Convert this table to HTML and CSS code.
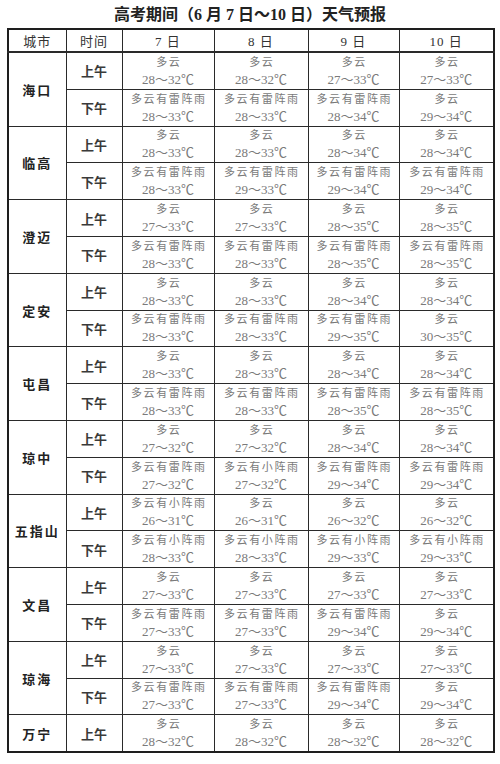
FILE: index.html
```html
<!DOCTYPE html>
<html lang="zh-CN">
<head>
<meta charset="utf-8">
<title>高考期间天气预报</title>
<link rel="stylesheet" href="styles.css">
</head>
<body>
<div class="page">
  <h1 class="title">高考期间（6 月 7 日～10 日）天气预报</h1>
  <table class="forecast">
    <colgroup>
      <col class="c-city"><col class="c-time"><col class="c-d7"><col class="c-d8"><col class="c-d9"><col class="c-d10">
    </colgroup>
    <thead>
      <tr><th>城市</th><th>时间</th><th>7 日</th><th>8 日</th><th>9 日</th><th>10 日</th></tr>
    </thead>
    <tbody>
      <tr><td class="city" rowspan="2">海口</td><td class="time">上午</td>
        <td><span class="w">多云</span><span class="t">28～32℃</span></td>
        <td><span class="w">多云</span><span class="t">28～32℃</span></td>
        <td><span class="w">多云</span><span class="t">27～33℃</span></td>
        <td><span class="w">多云</span><span class="t">27～33℃</span></td></tr>
      <tr><td class="time">下午</td>
        <td><span class="w">多云有雷阵雨</span><span class="t">28～33℃</span></td>
        <td><span class="w">多云有雷阵雨</span><span class="t">28～33℃</span></td>
        <td><span class="w">多云有雷阵雨</span><span class="t">28～34℃</span></td>
        <td><span class="w">多云</span><span class="t">29～34℃</span></td></tr>

      <tr><td class="city" rowspan="2">临高</td><td class="time">上午</td>
        <td><span class="w">多云</span><span class="t">28～33℃</span></td>
        <td><span class="w">多云</span><span class="t">28～33℃</span></td>
        <td><span class="w">多云</span><span class="t">28～34℃</span></td>
        <td><span class="w">多云</span><span class="t">28～34℃</span></td></tr>
      <tr><td class="time">下午</td>
        <td><span class="w">多云有雷阵雨</span><span class="t">28～33℃</span></td>
        <td><span class="w">多云有雷阵雨</span><span class="t">29～33℃</span></td>
        <td><span class="w">多云有雷阵雨</span><span class="t">29～34℃</span></td>
        <td><span class="w">多云有雷阵雨</span><span class="t">29～34℃</span></td></tr>

      <tr><td class="city" rowspan="2">澄迈</td><td class="time">上午</td>
        <td><span class="w">多云</span><span class="t">27～33℃</span></td>
        <td><span class="w">多云</span><span class="t">27～33℃</span></td>
        <td><span class="w">多云</span><span class="t">28～35℃</span></td>
        <td><span class="w">多云</span><span class="t">28～35℃</span></td></tr>
      <tr><td class="time">下午</td>
        <td><span class="w">多云有雷阵雨</span><span class="t">28～33℃</span></td>
        <td><span class="w">多云有雷阵雨</span><span class="t">28～33℃</span></td>
        <td><span class="w">多云有雷阵雨</span><span class="t">28～35℃</span></td>
        <td><span class="w">多云有雷阵雨</span><span class="t">28～35℃</span></td></tr>

      <tr><td class="city" rowspan="2">定安</td><td class="time">上午</td>
        <td><span class="w">多云</span><span class="t">28～33℃</span></td>
        <td><span class="w">多云</span><span class="t">28～33℃</span></td>
        <td><span class="w">多云</span><span class="t">28～34℃</span></td>
        <td><span class="w">多云</span><span class="t">28～34℃</span></td></tr>
      <tr><td class="time">下午</td>
        <td><span class="w">多云有雷阵雨</span><span class="t">28～33℃</span></td>
        <td><span class="w">多云有雷阵雨</span><span class="t">28～33℃</span></td>
        <td><span class="w">多云有雷阵雨</span><span class="t">29～35℃</span></td>
        <td><span class="w">多云</span><span class="t">30～35℃</span></td></tr>

      <tr><td class="city" rowspan="2">屯昌</td><td class="time">上午</td>
        <td><span class="w">多云</span><span class="t">28～33℃</span></td>
        <td><span class="w">多云</span><span class="t">28～33℃</span></td>
        <td><span class="w">多云</span><span class="t">28～34℃</span></td>
        <td><span class="w">多云</span><span class="t">28～34℃</span></td></tr>
      <tr><td class="time">下午</td>
        <td><span class="w">多云有雷阵雨</span><span class="t">28～33℃</span></td>
        <td><span class="w">多云有雷阵雨</span><span class="t">28～33℃</span></td>
        <td><span class="w">多云有雷阵雨</span><span class="t">28～35℃</span></td>
        <td><span class="w">多云有雷阵雨</span><span class="t">28～35℃</span></td></tr>

      <tr><td class="city" rowspan="2">琼中</td><td class="time">上午</td>
        <td><span class="w">多云</span><span class="t">27～32℃</span></td>
        <td><span class="w">多云</span><span class="t">27～32℃</span></td>
        <td><span class="w">多云</span><span class="t">28～34℃</span></td>
        <td><span class="w">多云</span><span class="t">28～34℃</span></td></tr>
      <tr><td class="time">下午</td>
        <td><span class="w">多云有雷阵雨</span><span class="t">27～32℃</span></td>
        <td><span class="w">多云有小阵雨</span><span class="t">27～32℃</span></td>
        <td><span class="w">多云有雷阵雨</span><span class="t">29～34℃</span></td>
        <td><span class="w">多云有雷阵雨</span><span class="t">29～34℃</span></td></tr>

      <tr><td class="city" rowspan="2">五指山</td><td class="time">上午</td>
        <td><span class="w">多云有小阵雨</span><span class="t">26～31℃</span></td>
        <td><span class="w">多云</span><span class="t">26～31℃</span></td>
        <td><span class="w">多云</span><span class="t">26～32℃</span></td>
        <td><span class="w">多云</span><span class="t">26～32℃</span></td></tr>
      <tr><td class="time">下午</td>
        <td><span class="w">多云有小阵雨</span><span class="t">28～33℃</span></td>
        <td><span class="w">多云有小阵雨</span><span class="t">28～33℃</span></td>
        <td><span class="w">多云有小阵雨</span><span class="t">29～33℃</span></td>
        <td><span class="w">多云有小阵雨</span><span class="t">29～33℃</span></td></tr>

      <tr><td class="city" rowspan="2">文昌</td><td class="time">上午</td>
        <td><span class="w">多云</span><span class="t">27～33℃</span></td>
        <td><span class="w">多云</span><span class="t">27～33℃</span></td>
        <td><span class="w">多云</span><span class="t">27～33℃</span></td>
        <td><span class="w">多云</span><span class="t">27～33℃</span></td></tr>
      <tr><td class="time">下午</td>
        <td><span class="w">多云有雷阵雨</span><span class="t">27～33℃</span></td>
        <td><span class="w">多云有雷阵雨</span><span class="t">27～33℃</span></td>
        <td><span class="w">多云有雷阵雨</span><span class="t">29～34℃</span></td>
        <td><span class="w">多云</span><span class="t">29～34℃</span></td></tr>

      <tr><td class="city" rowspan="2">琼海</td><td class="time">上午</td>
        <td><span class="w">多云</span><span class="t">27～33℃</span></td>
        <td><span class="w">多云</span><span class="t">27～33℃</span></td>
        <td><span class="w">多云</span><span class="t">27～33℃</span></td>
        <td><span class="w">多云</span><span class="t">27～33℃</span></td></tr>
      <tr><td class="time">下午</td>
        <td><span class="w">多云有雷阵雨</span><span class="t">27～33℃</span></td>
        <td><span class="w">多云有雷阵雨</span><span class="t">27～33℃</span></td>
        <td><span class="w">多云有雷阵雨</span><span class="t">29～34℃</span></td>
        <td><span class="w">多云</span><span class="t">29～34℃</span></td></tr>

      <tr><td class="city">万宁</td><td class="time">上午</td>
        <td><span class="w">多云</span><span class="t">28～32℃</span></td>
        <td><span class="w">多云</span><span class="t">28～32℃</span></td>
        <td><span class="w">多云</span><span class="t">28～32℃</span></td>
        <td><span class="w">多云</span><span class="t">28～32℃</span></td></tr>
    </tbody>
  </table>
</div>
</body>
</html>
```

FILE: styles.css
```css
html, body {
  margin: 0;
  padding: 0;
  background: #ffffff;
}

body {
  font-family: "Liberation Serif", "Noto Sans CJK SC", serif;
  color: #333333;
}

.page {
  width: 500px;
  padding: 0 0 0 7px;
  box-sizing: border-box;
}

.title {
  margin: 0;
  width: 486px;
  height: 28px;
  line-height: 30px;
  text-align: center;
  font-size: 16px;
  font-weight: bold;
  color: #222222;
  font-family: "Liberation Serif", "Noto Sans CJK SC", serif;
}

.forecast {
  width: 486px;
  table-layout: fixed;
  border-collapse: collapse;
  border: 2px solid #1e1e1e;
}

.c-city { width: 58px; }
.c-time { width: 56px; }
.c-d7 { width: 92px; }
.c-d8 { width: 94px; }
.c-d9 { width: 91px; }
.c-d10 { width: 95px; }

.forecast th,
.forecast td {
  border: 1px solid #2a2a2a;
  padding: 0;
  text-align: center;
  vertical-align: middle;
}

.forecast thead th {
  height: 21px;
  font-weight: normal;
  font-size: 13px;
  letter-spacing: 1px;
  color: #333333;
  border-bottom: 2px solid #2a2a2a;
}

.forecast tbody td {
  height: 35.8px;
}

.city {
  font-size: 13px;
  font-weight: bold;
  letter-spacing: 2px;
  color: #222222;
}

.time {
  font-size: 13px;
  font-weight: bold;
  color: #3a3a3a;
}

.w,
.t {
  display: block;
  line-height: 17px;
  color: #7a7a7a;
}

.w {
  font-size: 11px;
  letter-spacing: 1.6px;
  padding-left: 1.6px;
}

.t {
  font-size: 13px;
}
```
